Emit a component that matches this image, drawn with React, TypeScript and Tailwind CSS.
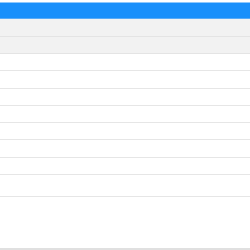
const rows = [17, 18, 17, 17, 17, 18, 17, 22];

export default function App() {
  return (
    <div className="w-[250px] h-[250px] bg-white pt-[2px] overflow-hidden">
      <div className="h-[17px] bg-[#1a90fb] border-t border-[#8ec8fd] border-b border-b-[#5aabf7]" />
      <div className="h-[18px] bg-[#f2f2f2] border-b border-[#e4e4e4]" />
      <div className="h-[17px] bg-[#f2f2f2] border-b border-[#e4e4e4]" />
      {rows.map((h, i) => (
        <div
          key={i}
          className="bg-white border-b border-[#e6e6e6]"
          style={{ height: `${h}px` }}
        />
      ))}
      <div className="h-[53px] bg-white border-b-2 border-[#e0e0e0]" />
    </div>
  );
}
